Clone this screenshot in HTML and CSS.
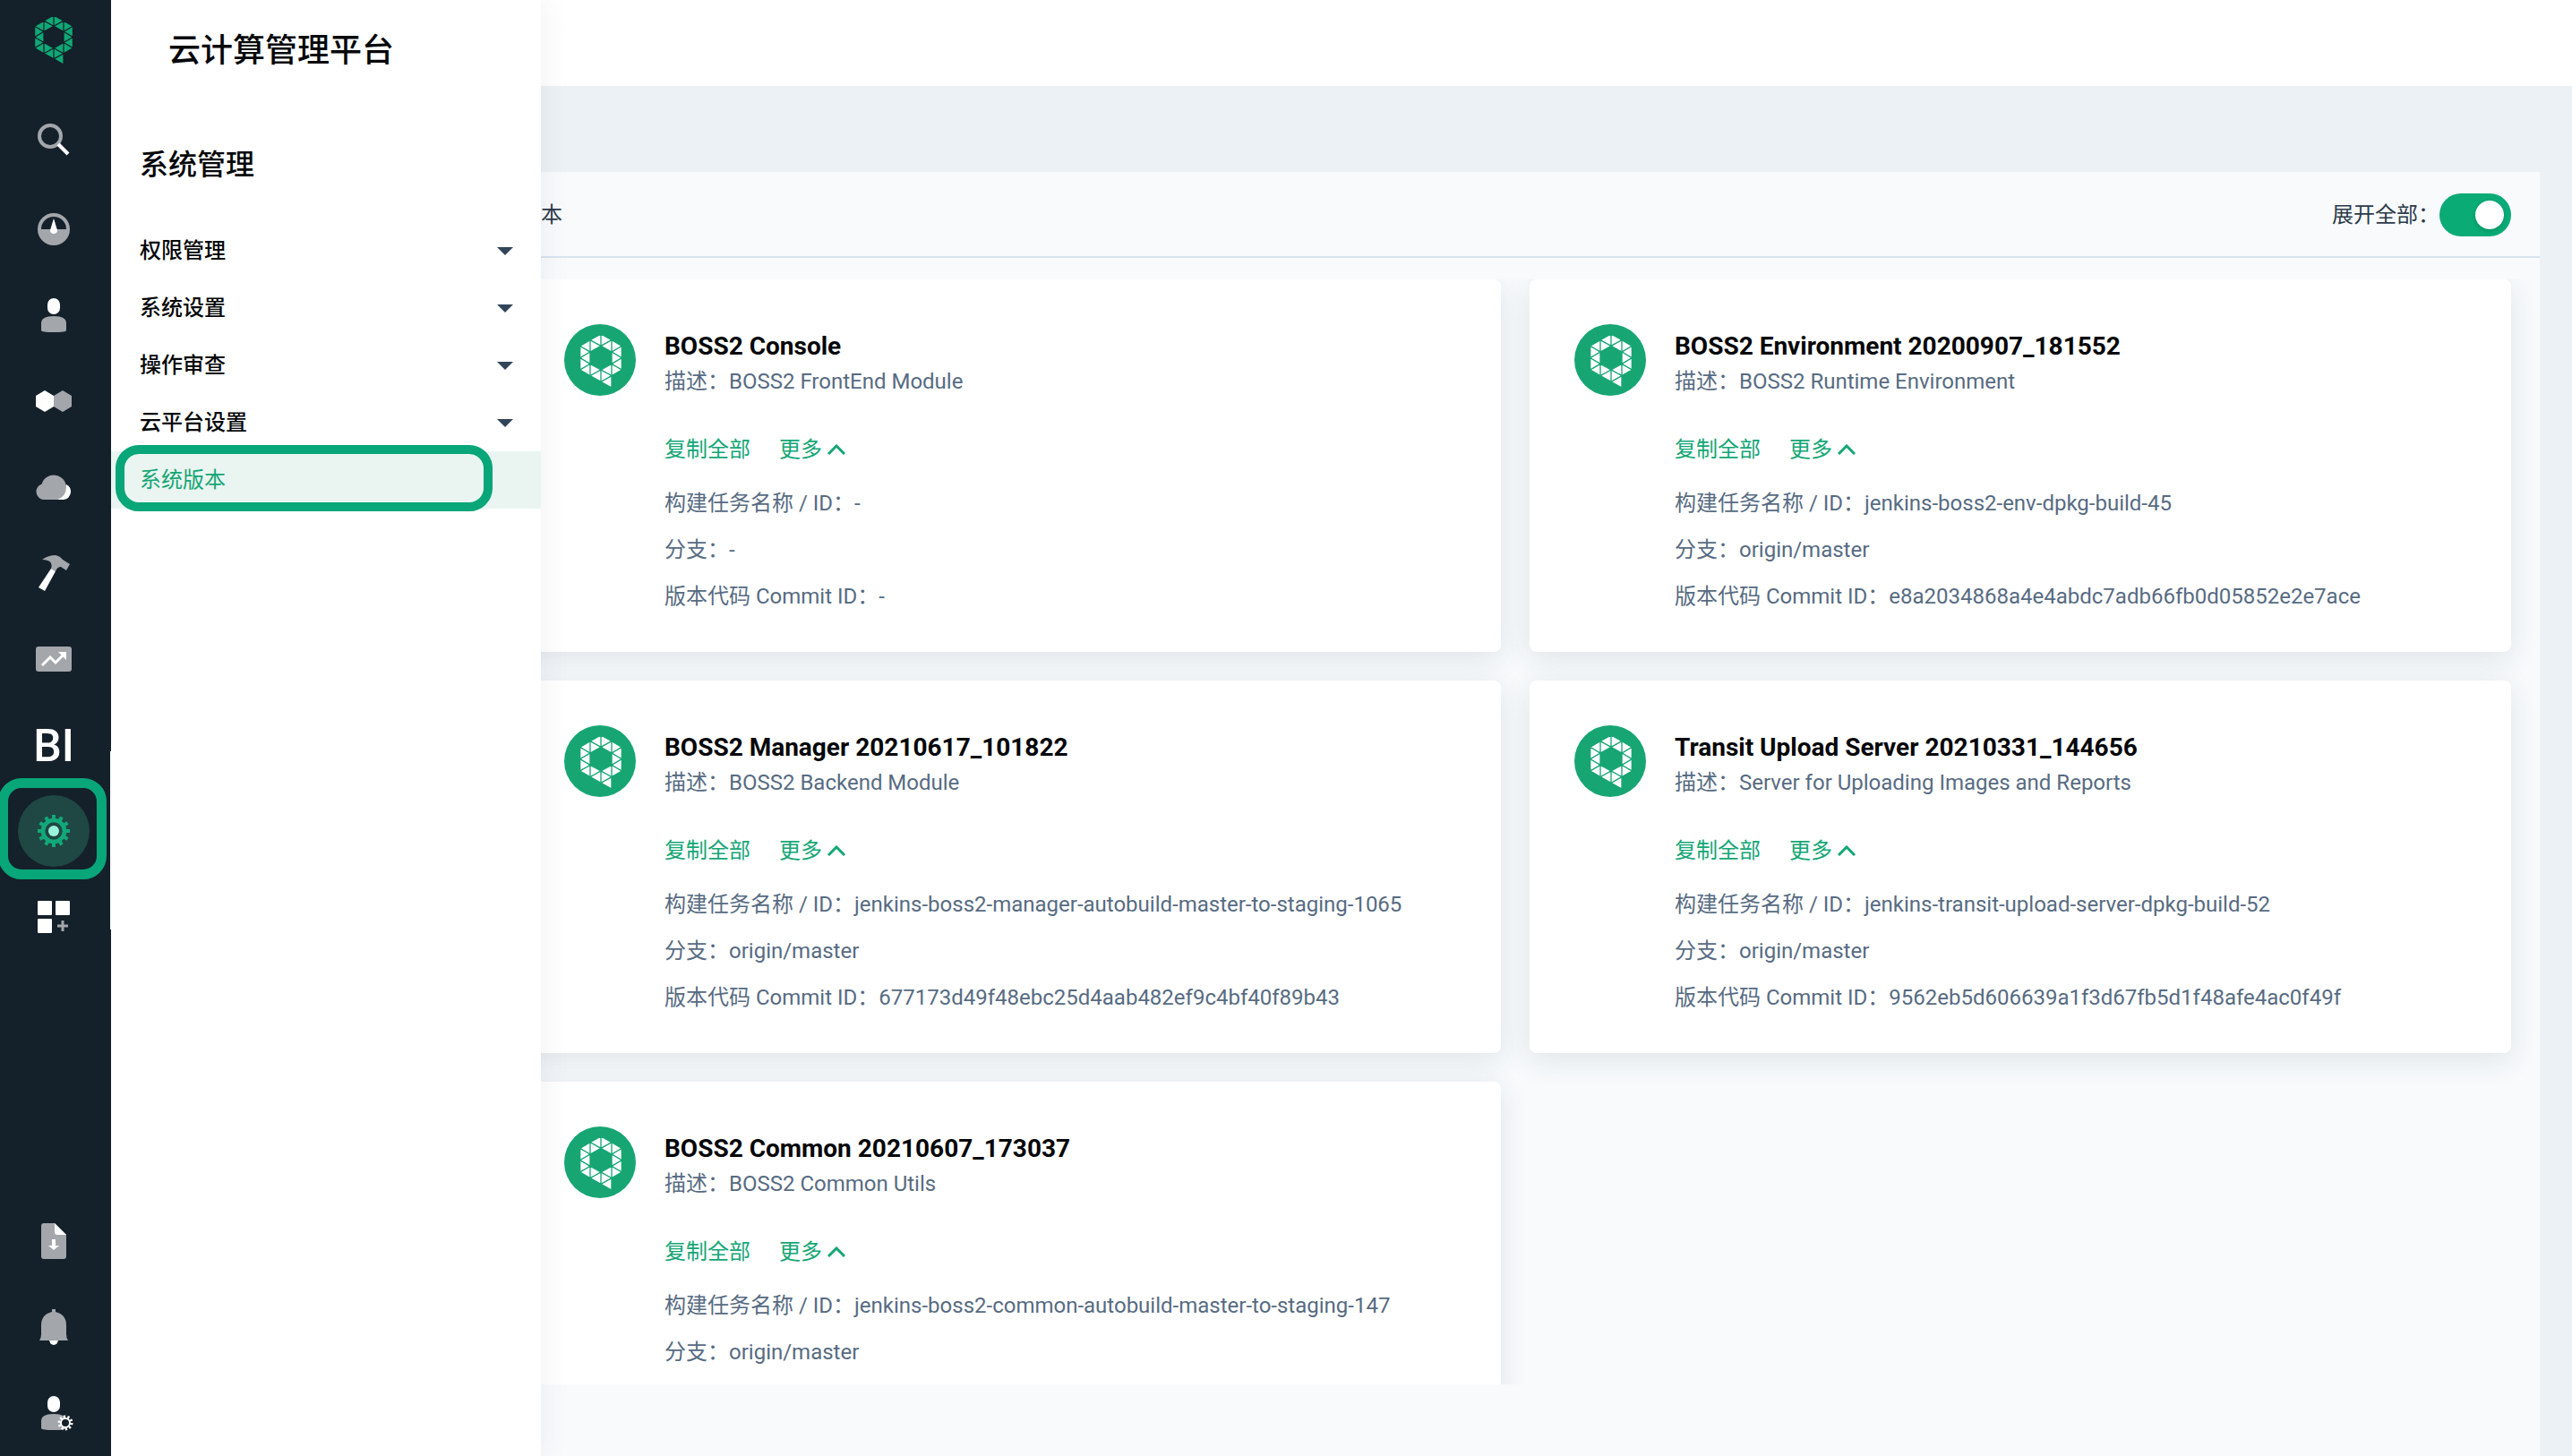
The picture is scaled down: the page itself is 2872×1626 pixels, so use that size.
FILE: index.html
```
<!DOCTYPE html>
<html lang="zh-CN">
<head>
<meta charset="utf-8">
<title>云计算管理平台 - 系统版本</title>
<link rel="stylesheet" href="styles.css">
</head>
<body>
<svg class="sprite" aria-hidden="true">
  <symbol id="logo" viewBox="-1 -1 72 92">
    <path d="M0 20V40L17 30ZM0 40V60L17 50ZM17 10V30L0 20ZM17 30V50L0 40ZM17 50V70L0 60ZM35 0V20L17 10ZM17 10V30L35 20ZM17 50V70L35 60ZM35 60V80L17 70ZM70 20V40L53 30ZM70 40V60L53 50ZM53 10V30L70 20ZM53 30V50L70 40ZM53 50V70L70 60ZM35 0V20L53 10ZM53 10V30L35 20ZM53 50V70L35 60ZM35 60V80L53 70ZM35 80L53 70V90Z"/>
  </symbol>
  <symbol id="gear" viewBox="-18 -18 36 36">
    <g stroke="none">
      <path id="tooth" d="M-2-18H2V-12H-2ZM-2 12H2V18H-2Z"/>
      <use href="#tooth" transform="rotate(30)"/>
      <use href="#tooth" transform="rotate(60)"/>
      <use href="#tooth" transform="rotate(90)"/>
      <use href="#tooth" transform="rotate(120)"/>
      <use href="#tooth" transform="rotate(150)"/>
    </g>
    <circle r="12" fill="none" stroke="currentColor" stroke-width="4.6"/>
  </symbol>
  <symbol id="badge" viewBox="0 0 80 80">
    <circle cx="40" cy="40" r="40" fill="#17a673" stroke="none"/>
    <use href="#logo" x="17" y="10" width="48" height="62"/>
  </symbol>
</svg>

<div class="app">
  <nav class="rail" aria-label="主导航">
    <a class="rail-logo" href="#" aria-label="首页"><svg width="44" height="57"><use href="#logo"/></svg></a>
    <a class="rail-item rail-search" href="#" aria-label="搜索">
      <svg width="40" height="40"><circle cx="16" cy="16" r="12" fill="none" stroke="#a3a6ab" stroke-width="4"/><path d="M25 25L36 36" stroke="#fff" stroke-width="4"/></svg>
    </a>
    <div class="rail-list">
      <a class="rail-item" href="#" aria-label="概览">
        <svg width="40" height="40"><circle cx="20" cy="20" r="16" fill="none" stroke="#a3a6ab" stroke-width="4"/><path d="M3 20H37A17 17 0 0 1 3 20Z" fill="#a3a6ab"/><path d="M20 8L24 21A4 4 0 1 1 16 21Z" fill="#fff"/></svg>
      </a>
      <a class="rail-item" href="#" aria-label="用户">
        <svg width="40" height="40"><rect x="13" y="1" width="14" height="18" rx="7" fill="#fff"/><path d="M6 37V29Q6 21 20 21Q34 21 34 29V37Q34 39 20 39Q6 39 6 37Z" fill="#a3a6ab"/></svg>
      </a>
      <a class="rail-item" href="#" aria-label="资源">
        <svg width="40" height="40"><path d="M30 8L40 14V26L30 32L20 26V14Z" fill="#a3a6ab"/><path d="M10 8L20 14V26L10 32L0 26V14Z" fill="#fff"/></svg>
      </a>
      <a class="rail-item" href="#" aria-label="云">
        <svg width="40" height="40"><path d="M24 34L34 17A9 9 0 0 1 31 34Z" fill="#fff"/><path d="M9 34A9 9 0 0 1 6.6 16.5A14 14 0 0 1 34 20Q34 30 24 34Z" fill="#a3a6ab"/></svg>
      </a>
      <a class="rail-item" href="#" aria-label="工具">
        <svg width="40" height="40"><path d="M7 5Q14 0 22 0Q27 1 30 5L38 10L34 17L28 13Q24 13 22 18L17 15Q20 5 7 5Z" fill="#a3a6ab"/><path d="M17 15L22 18L10 40L3 36Z" fill="#fff"/></svg>
      </a>
      <a class="rail-item" href="#" aria-label="监控">
        <svg width="40" height="40"><rect y="6" width="40" height="28" rx="3" fill="#a3a6ab"/><path d="M7 27L16 18L22 24L31 15" fill="none" stroke="#fff" stroke-width="3"/><path d="M25 12H34V21Z" fill="#fff"/></svg>
      </a>
      <a class="rail-item rail-text" href="#">BI</a>
      <a class="rail-item" href="#" aria-label="系统管理" aria-current="page">
        <span class="rail-active"><svg width="36" height="36"><use href="#gear"/><circle cx="18" cy="18" r="6" fill="#9bf3db"/></svg></span>
        <span class="mark mark-rail"></span>
      </a>
      <a class="rail-item" href="#" aria-label="更多应用">
        <svg width="36" height="36"><path d="M1 0H15Q16 0 16 1V15Q16 16 15 16H1Q0 16 0 15V1Q0 0 1 0ZM21 0H35Q36 0 36 1V15Q36 16 35 16H21Q20 16 20 15V1Q20 0 21 0ZM1 20H15Q16 20 16 21V35Q16 36 15 36H1Q0 36 0 35V21Q0 20 1 20Z" fill="#fff"/><path d="M28 22V34M22 28H34" stroke="#a3a6ab" stroke-width="3"/></svg>
      </a>
    </div>
    <div class="rail-foot">
      <a class="rail-item" href="#" aria-label="下载">
        <svg width="40" height="40"><path d="M9 0H21L34 13V37Q34 40 31 40H9Q6 40 6 37V3Q6 0 9 0Z" fill="#a3a6ab"/><path d="M21 0L34 13H24Q21 13 21 10Z" fill="#fff"/><path d="M18 18H22V25H26L20 30L14 25H18Z" fill="#fff"/></svg>
      </a>
      <a class="rail-item" href="#" aria-label="通知">
        <svg width="40" height="40"><path d="M15 34H25A5 6 0 0 1 15 34Z" fill="#fff"/><path d="M18 0H22V3Q34 6 34 18V28Q34 32 36 35H4Q6 32 6 28V18Q6 6 18 3Z" fill="#a3a6ab"/></svg>
      </a>
      <a class="rail-item" href="#" aria-label="账户设置">
        <svg class="rail-user" width="44" height="40"><rect x="15" y="1" width="14" height="18" rx="7" fill="#fff"/><path d="M8 37V29Q8 21 22 21Q36 21 36 29V37Q36 39 22 39Q8 39 8 37Z" fill="#a3a6ab"/><circle cx="35" cy="31" r="5" fill="#14202a"/><circle cx="35" cy="31" r="5" fill="none" stroke="#fff" stroke-width="2"/><circle cx="35" cy="31" r="7" fill="none" stroke="#fff" stroke-width="3" stroke-dasharray="2.2 2.2"/></svg>
      </a>
    </div>
    <span class="rail-scroll"></span>
  </nav>

  <aside class="panel">
    <h1 class="panel-brand">云计算管理平台</h1>
    <h2 class="panel-title">系统管理</h2>
    <ul class="menu">
      <li><button class="menu-item" type="button">权限管理<span class="caret"></span></button></li>
      <li><button class="menu-item" type="button">系统设置<span class="caret"></span></button></li>
      <li><button class="menu-item" type="button">操作审查<span class="caret"></span></button></li>
      <li><button class="menu-item" type="button">云平台设置<span class="caret"></span></button></li>
      <li><a class="menu-item menu-current" href="#" aria-current="page">系统版本<span class="mark mark-menu"></span></a></li>
    </ul>
  </aside>

  <div class="page">
    <header class="topbar"></header>
    <main class="content">
      <div class="content-head">
        <h2 class="content-title">版本</h2>
        <label class="toggle" for="expand-all">展开全部：<input class="switch" id="expand-all" type="checkbox" role="switch" checked></label>
      </div>
      <div class="cards">
        <article class="card">
          <svg class="card-badge"><use href="#badge"/></svg>
          <div class="card-body">
            <h3 class="card-title">BOSS2 Console</h3>
            <p class="card-desc">描述：BOSS2 FrontEnd Module</p>
            <div class="card-actions"><button class="link" type="button">复制全部</button><button class="link" type="button">更多<svg class="chevron" width="20" height="12"><path d="M1 11L10 2L19 11"/></svg></button></div>
            <p class="card-row">构建任务名称 / ID：-</p>
            <p class="card-row">分支：-</p>
            <p class="card-row">版本代码 Commit ID：-</p>
          </div>
        </article>
        <article class="card">
          <svg class="card-badge"><use href="#badge"/></svg>
          <div class="card-body">
            <h3 class="card-title">BOSS2 Environment 20200907_181552</h3>
            <p class="card-desc">描述：BOSS2 Runtime Environment</p>
            <div class="card-actions"><button class="link" type="button">复制全部</button><button class="link" type="button">更多<svg class="chevron" width="20" height="12"><path d="M1 11L10 2L19 11"/></svg></button></div>
            <p class="card-row">构建任务名称 / ID：jenkins-boss2-env-dpkg-build-45</p>
            <p class="card-row">分支：origin/master</p>
            <p class="card-row">版本代码 Commit ID：e8a2034868a4e4abdc7adb66fb0d05852e2e7ace</p>
          </div>
        </article>
        <article class="card">
          <svg class="card-badge"><use href="#badge"/></svg>
          <div class="card-body">
            <h3 class="card-title">BOSS2 Manager 20210617_101822</h3>
            <p class="card-desc">描述：BOSS2 Backend Module</p>
            <div class="card-actions"><button class="link" type="button">复制全部</button><button class="link" type="button">更多<svg class="chevron" width="20" height="12"><path d="M1 11L10 2L19 11"/></svg></button></div>
            <p class="card-row">构建任务名称 / ID：jenkins-boss2-manager-autobuild-master-to-staging-1065</p>
            <p class="card-row">分支：origin/master</p>
            <p class="card-row">版本代码 Commit ID：677173d49f48ebc25d4aab482ef9c4bf40f89b43</p>
          </div>
        </article>
        <article class="card">
          <svg class="card-badge"><use href="#badge"/></svg>
          <div class="card-body">
            <h3 class="card-title">Transit Upload Server 20210331_144656</h3>
            <p class="card-desc">描述：Server for Uploading Images and Reports</p>
            <div class="card-actions"><button class="link" type="button">复制全部</button><button class="link" type="button">更多<svg class="chevron" width="20" height="12"><path d="M1 11L10 2L19 11"/></svg></button></div>
            <p class="card-row">构建任务名称 / ID：jenkins-transit-upload-server-dpkg-build-52</p>
            <p class="card-row">分支：origin/master</p>
            <p class="card-row">版本代码 Commit ID：9562eb5d606639a1f3d67fb5d1f48afe4ac0f49f</p>
          </div>
        </article>
        <article class="card">
          <svg class="card-badge"><use href="#badge"/></svg>
          <div class="card-body">
            <h3 class="card-title">BOSS2 Common 20210607_173037</h3>
            <p class="card-desc">描述：BOSS2 Common Utils</p>
            <div class="card-actions"><button class="link" type="button">复制全部</button><button class="link" type="button">更多<svg class="chevron" width="20" height="12"><path d="M1 11L10 2L19 11"/></svg></button></div>
            <p class="card-row">构建任务名称 / ID：jenkins-boss2-common-autobuild-master-to-staging-147</p>
            <p class="card-row">分支：origin/master</p>
          </div>
        </article>
      </div>
    </main>
  </div>
</div>
</body>
</html>
```

FILE: styles.css
```
* { box-sizing: border-box; }

body {
  margin: 0;
  font-family: Roboto, "Noto Sans CJK SC", sans-serif;
  font-size: 24px;
  line-height: 32px;
  color: #2b3a4a;
  background: #ecf1f5;
}

h1, h2, h3, p, ul { margin: 0; padding: 0; }
ul { list-style: none; }
a { color: inherit; text-decoration: none; }
button { font: inherit; color: inherit; background: none; border: 0; padding: 0; cursor: pointer; }

.sprite { position: absolute; width: 0; height: 0; }

.app {
  position: relative;
  display: flex;
  height: 100vh;
  overflow: hidden;
}

/* icon rail */
.rail {
  position: relative;
  z-index: 3;
  flex: none;
  display: flex;
  flex-direction: column;
  width: 124px;
  padding-right: 4px;
  background: #14202a;
}
.rail-logo {
  display: flex;
  justify-content: center;
  padding: 16px 0 31px;
}
.rail-logo svg { fill: #0fa874; stroke: #14202a; stroke-width: 2; }
.rail-item {
  position: relative;
  display: flex;
  align-items: center;
  justify-content: center;
  height: 96px;
  color: #fff;
}
.rail-search { height: 104px; }
.rail-text { padding-top: 2px; font-size: 50px; font-weight: 500; }
.rail-active {
  display: flex;
  align-items: center;
  justify-content: center;
  width: 80px;
  height: 80px;
  border-radius: 50%;
  background: #1f4743;
  color: #12a879;
  fill: #12a879;
}
.rail-foot { margin-top: auto; }
.rail-scroll {
  position: absolute;
  right: 0;
  top: 839px;
  width: 1px;
  height: 199px;
  background: #fff;
}

/* highlight frames */
.mark {
  position: absolute;
  border: 11px solid #08a678;
  border-radius: 26px;
  pointer-events: none;
}
.mark-rail { left: -2px; right: 1px; top: -11px; bottom: -6px; }
.mark-menu { left: 5px; right: 54px; top: -7px; bottom: -3px; border-width: 10px; }

/* secondary menu */
.panel {
  position: absolute;
  z-index: 2;
  left: 124px;
  top: 0;
  bottom: 0;
  width: 480px;
  background: #fff;
  box-shadow: 0 0 32px rgba(50, 69, 88, 0.08);
  color: #050709;
}
.panel-brand {
  padding: 30px 64px 26px;
  font-size: 36px;
  line-height: 54px;
  font-weight: 500;
}
.panel-title {
  padding: 50px 32px 40px;
  font-size: 32px;
  line-height: 48px;
  font-weight: 500;
}
.menu-item {
  position: relative;
  display: flex;
  align-items: center;
  justify-content: space-between;
  width: 100%;
  height: 64px;
  padding: 0 31px 0 32px;
  font-weight: 500;
}
.menu-current { background: #eaf5f1; color: #15a675; font-weight: 400; }
.caret {
  border: 9px solid transparent;
  border-top-color: #324558;
  border-bottom: 0;
}

/* page */
.page {
  flex: 1;
  display: flex;
  flex-direction: column;
  min-width: 0;
}
.topbar { flex: none; height: 96px; background: #fff; }
.content {
  flex: 1;
  display: flex;
  flex-direction: column;
  min-height: 0;
  margin: 96px 36px 0 424px;
  padding-bottom: 80px;
  background: #f8fafc;
}
.content-head {
  flex: none;
  display: flex;
  align-items: center;
  justify-content: space-between;
  height: 96px;
  padding: 2px 32px 0;
  border-bottom: 2px solid #d8e3ee;
}
.content-title { font-size: 24px; line-height: 32px; font-weight: 400; }
.toggle { display: flex; align-items: center; font-weight: 400; }
.switch {
  appearance: none;
  width: 80px;
  height: 48px;
  margin: 0;
  padding: 8px;
  border-radius: 24px;
  background: #0aab75;
}
.switch::before {
  content: "";
  display: block;
  width: 32px;
  height: 32px;
  margin-left: auto;
  border-radius: 50%;
  background: #fff;
  box-shadow: 0 2px 4px rgba(0, 40, 30, 0.2);
}

.cards {
  display: grid;
  grid-template-columns: 1fr 1fr;
  grid-auto-rows: 416px;
  gap: 32px;
  min-height: 0;
  margin-top: 24px;
  padding: 0 32px;
  overflow: hidden;
}
.card {
  display: flex;
  gap: 32px;
  padding: 50px;
  border-radius: 8px;
  background: #fff;
  box-shadow: 0 8px 32px rgba(40, 75, 90, 0.12);
}
.card-badge { flex: none; width: 80px; height: 80px; fill: #fff; stroke: #17a673; stroke-width: 2; }
.card-body { min-width: 0; color: #576b82; }
.card-title { padding-top: 2px; font-size: 28px; line-height: 46px; font-weight: 700; color: #050709; }
.card-actions { display: flex; gap: 32px; margin: 44px 0 28px; color: #15a675; }
.link { display: flex; align-items: center; gap: 6px; }
.chevron { fill: none; stroke: #15a675; stroke-width: 3; }
.card-row + .card-row { margin-top: 20px; }
```
